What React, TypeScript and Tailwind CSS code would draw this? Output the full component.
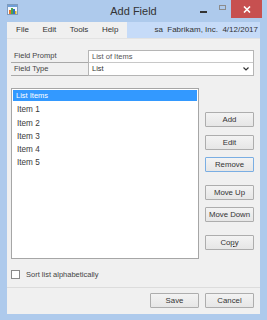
import React from "react";

const font = { fontFamily: '"Liberation Sans", Arial, sans-serif' };

function Btn({ children, focused }: { children: React.ReactNode; focused?: boolean }) {
  return (
    <div
      className={
        "h-[15px] w-[49px] flex items-center justify-center text-[7.8px] text-[#333] rounded-[1px] border bg-gradient-to-b from-[#f3f3f3] to-[#e6e6e6] " +
        (focused ? "border-[#7aaee3]" : "border-[#adadad]")
      }
    >
      {children}
    </div>
  );
}

export default function App() {
  return (
    <div className="w-[267px] h-[320px] bg-[#aecaec] flex flex-col overflow-hidden" style={font}>
      {/* Title bar */}
      <div className="h-[22px] grid grid-cols-[1fr_auto_1fr] items-start shrink-0">
        <div className="pl-[7px] pt-[4px]">
          <svg width="11" height="11" viewBox="0 0 11 11">
            <rect x="0.5" y="0.5" width="10" height="10" fill="#f4f7fb" stroke="#7f9bbd" />
            <rect x="1" y="1" width="9" height="2" fill="#6f9fd8" />
            <rect x="2" y="6" width="2" height="4" fill="#e8742c" />
            <rect x="4" y="4" width="2" height="6" fill="#4aa54a" />
            <rect x="6" y="5" width="2" height="5" fill="#2f6fc2" />
            <rect x="8" y="7" width="1.5" height="3" fill="#d9b52b" />
          </svg>
        </div>
        <div className="text-[11px] text-[#333] pt-[4px] leading-[14px]">Add Field</div>
        <div className="flex justify-end items-start pr-[5px]">
          <div className="w-[7px] h-[2px] bg-[#333] mt-[11px] mr-[12px]" />
          <div className="w-[7px] h-[5px] border border-[#8c8c8c] mt-[5px] mr-[5px]" />
          <div className="w-[31px] h-[18px] bg-[#c75050] flex items-center justify-center">
            <svg width="8" height="7" viewBox="0 0 8 7">
              <path d="M1 0.5 L7 6.5 M7 0.5 L1 6.5" stroke="#fff" strokeWidth="1.6" />
            </svg>
          </div>
        </div>
      </div>

      {/* Inner window */}
      <div className="flex-1 mx-[7px] mb-[6px] flex flex-col min-h-0">
        {/* Menu bar */}
        <div className="h-[16px] flex shrink-0">
          <div className="w-[120px] bg-[#f0f0f0] flex items-center pl-[9px] gap-[13.5px] text-[8px] text-[#333]">
            <span>File</span>
            <span>Edit</span>
            <span>Tools</span>
            <span>Help</span>
          </div>
          <div className="flex-1 bg-[#c6dbf8] flex items-center justify-end pr-[2px] text-[8px] text-[#333] whitespace-pre">
            {"sa  Fabrikam, Inc.  4/12/2017"}
          </div>
        </div>

        {/* Content */}
        <div className="flex-1 bg-[#f0f0f0] flex flex-col min-h-0 border-t border-[#e3e3e3]">
          <div className="flex-1 pl-[4px] pr-[6px] pt-[11px]">
            {/* Field rows */}
            <div className="flex">
              <div className="w-[77px] flex flex-col">
                <div className="h-[13px] border-b border-[#a9a9a9] pl-[3px] text-[7.5px] text-[#444] flex items-center">
                  Field Prompt
                </div>
                <div className="h-[13px] border-b border-[#a9a9a9] pl-[3px] text-[7.5px] text-[#444] flex items-center">
                  Field Type
                </div>
              </div>
              <div className="flex-1 flex flex-col border border-[#b5b5b5] bg-white">
                <div className="h-[12px] border-b border-[#c8c8c8] pl-[3px] text-[7.5px] text-[#555] flex items-center">
                  List of Items
                </div>
                <div className="h-[12px] pl-[3px] pr-[4px] text-[7.5px] text-[#333] flex items-center justify-between">
                  <span>List</span>
                  <svg width="6" height="4" viewBox="0 0 6 4">
                    <path d="M0.5 0.5 L3 3 L5.5 0.5" stroke="#333" strokeWidth="1.2" fill="none" />
                  </svg>
                </div>
              </div>
            </div>

            {/* List + buttons */}
            <div className="flex mt-[12px] gap-[6px]">
              <div className="w-[188px] h-[171px] border border-[#a6a6a6] bg-white p-[1px] flex flex-col">
                <div className="h-[11px] bg-[#3399ff] text-white text-[7.5px] pl-[3px] flex items-center">
                  List Items
                </div>
                <div className="pt-[3px] flex flex-col">
                  {["Item 1", "Item 2", "Item 3", "Item 4", "Item 5"].map((t) => (
                    <div key={t} className="h-[13.2px] pl-[4px] text-[8.2px] text-[#3a3a3a] flex items-center">
                      {t}
                    </div>
                  ))}
                </div>
              </div>
              <div className="flex flex-col">
                <div className="mt-[24px]"><Btn>Add</Btn></div>
                <div className="mt-[8px]"><Btn>Edit</Btn></div>
                <div className="mt-[7px]"><Btn focused>Remove</Btn></div>
                <div className="mt-[13px]"><Btn>Move Up</Btn></div>
                <div className="mt-[7px]"><Btn>Move Down</Btn></div>
                <div className="mt-[13px]">
                  <Btn>
                    Co<span className="underline">p</span>y
                  </Btn>
                </div>
              </div>
            </div>

            {/* Checkbox */}
            <div className="flex items-center mt-[10px] gap-[6px]">
              <div className="w-[9px] h-[9px] border border-[#8a8a8a] bg-white" />
              <span className="text-[7.5px] text-[#444]">Sort list alphabetically</span>
            </div>
          </div>

          {/* Footer */}
          <div className="h-[27px] border-t border-[#dcdcdc] flex justify-end items-start pt-[5px] pr-[6px] gap-[6px] shrink-0">
            <Btn>Save</Btn>
            <Btn>Cancel</Btn>
          </div>
        </div>
      </div>
    </div>
  );
}
